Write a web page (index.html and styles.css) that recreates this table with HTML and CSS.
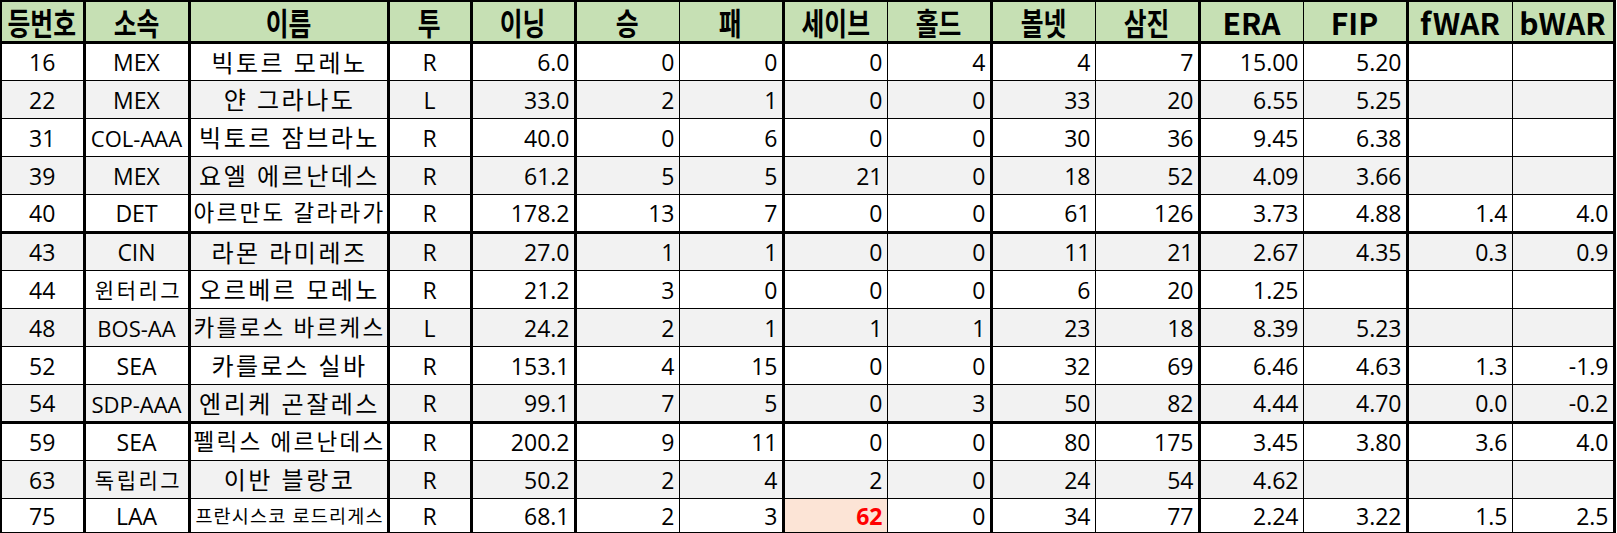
FILE: index.html
```html
<!DOCTYPE html>
<html lang="ko">
<head>
<meta charset="utf-8">
<title>투수 기록</title>
<link rel="stylesheet" href="styles.css">
</head>
<body>
<table class="sheet">
  <colgroup>
    <col class="w83"><col class="w105"><col class="w199"><col class="w83">
    <col class="w104"><col class="w104"><col class="w104"><col class="w104"><col class="w104">
    <col class="w104"><col class="w104"><col class="w104"><col class="w104">
    <col class="w105"><col class="w102">
  </colgroup>
  <thead>
    <tr>
      <th><span class="k">등번호</span></th>
      <th><span class="k">소속</span></th>
      <th><span class="k">이름</span></th>
      <th><span class="k">투</span></th>
      <th><span class="k">이닝</span></th>
      <th><span class="k">승</span></th>
      <th><span class="k">패</span></th>
      <th><span class="k">세이브</span></th>
      <th><span class="k">홀드</span></th>
      <th><span class="k">볼넷</span></th>
      <th><span class="k">삼진</span></th>
      <th><span class="l">ERA</span></th>
      <th><span class="l">FIP</span></th>
      <th><span class="l">fWAR</span></th>
      <th><span class="l">bWAR</span></th>
    </tr>
  </thead>
  <tbody>
    <tr><td>16</td><td>MEX</td><td>빅토르 모레노</td><td>R</td><td>6.0</td><td>0</td><td>0</td><td>0</td><td>4</td><td>4</td><td>7</td><td>15.00</td><td>5.20</td><td></td><td></td></tr>
    <tr class="alt"><td>22</td><td>MEX</td><td>얀 그라나도</td><td>L</td><td>33.0</td><td>2</td><td>1</td><td>0</td><td>0</td><td>33</td><td>20</td><td>6.55</td><td>5.25</td><td></td><td></td></tr>
    <tr><td>31</td><td class="sm">COL-AAA</td><td>빅토르 잠브라노</td><td>R</td><td>40.0</td><td>0</td><td>6</td><td>0</td><td>0</td><td>30</td><td>36</td><td>9.45</td><td>6.38</td><td></td><td></td></tr>
    <tr class="alt"><td>39</td><td>MEX</td><td>요엘 에르난데스</td><td>R</td><td>61.2</td><td>5</td><td>5</td><td>21</td><td>0</td><td>18</td><td>52</td><td>4.09</td><td>3.66</td><td></td><td></td></tr>
    <tr class="sep"><td>40</td><td>DET</td><td class="fit">아르만도 갈라라가</td><td>R</td><td>178.2</td><td>13</td><td>7</td><td>0</td><td>0</td><td>61</td><td>126</td><td>3.73</td><td>4.88</td><td>1.4</td><td>4.0</td></tr>
    <tr class="alt"><td>43</td><td>CIN</td><td>라몬 라미레즈</td><td>R</td><td>27.0</td><td>1</td><td>1</td><td>0</td><td>0</td><td>11</td><td>21</td><td>2.67</td><td>4.35</td><td>0.3</td><td>0.9</td></tr>
    <tr><td>44</td><td class="kt">윈터리그</td><td>오르베르 모레노</td><td>R</td><td>21.2</td><td>3</td><td>0</td><td>0</td><td>0</td><td>6</td><td>20</td><td>1.25</td><td></td><td></td><td></td></tr>
    <tr class="alt"><td>48</td><td class="sm">BOS-AA</td><td class="fit">카를로스 바르케스</td><td>L</td><td>24.2</td><td>2</td><td>1</td><td>1</td><td>1</td><td>23</td><td>18</td><td>8.39</td><td>5.23</td><td></td><td></td></tr>
    <tr><td>52</td><td>SEA</td><td>카를로스 실바</td><td>R</td><td>153.1</td><td>4</td><td>15</td><td>0</td><td>0</td><td>32</td><td>69</td><td>6.46</td><td>4.63</td><td>1.3</td><td>-1.9</td></tr>
    <tr class="alt sep"><td>54</td><td class="sm">SDP-AAA</td><td>엔리케 곤잘레스</td><td>R</td><td>99.1</td><td>7</td><td>5</td><td>0</td><td>3</td><td>50</td><td>82</td><td>4.44</td><td>4.70</td><td>0.0</td><td>-0.2</td></tr>
    <tr><td>59</td><td>SEA</td><td class="fit">펠릭스 에르난데스</td><td>R</td><td>200.2</td><td>9</td><td>11</td><td>0</td><td>0</td><td>80</td><td>175</td><td>3.45</td><td>3.80</td><td>3.6</td><td>4.0</td></tr>
    <tr class="alt"><td>63</td><td class="kt">독립리그</td><td>이반 블랑코</td><td>R</td><td>50.2</td><td>2</td><td>4</td><td>2</td><td>0</td><td>24</td><td>54</td><td>4.62</td><td></td><td></td><td></td></tr>
    <tr class="last"><td>75</td><td>LAA</td><td class="tiny">프란시스코 로드리게스</td><td>R</td><td>68.1</td><td>2</td><td>3</td><td class="hot">62</td><td>0</td><td>34</td><td>77</td><td>2.24</td><td>3.22</td><td>1.5</td><td>2.5</td></tr>
  </tbody>
</table>
</body>
</html>
```

FILE: styles.css
```css
html, body {
  margin: 0;
  padding: 0;
  background: #ffffff;
}

.sheet {
  border-collapse: collapse;
  table-layout: fixed;
  width: 1615px;
  font-family: "Open Sans", "Noto Sans CJK KR", sans-serif;
  font-size: 23px;
  color: #000000;
  border-top: 2px solid #000;
  border-left: 2px solid #000;
}

.w83 { width: 83px; }
.w102 { width: 102px; }
.w104 { width: 104px; }
.w105 { width: 105px; }
.w199 { width: 199px; }

.sheet th,
.sheet td {
  border: 1px solid #000;
  padding: 0 4px;
  white-space: nowrap;
  overflow: hidden;
  line-height: 1;
}

/* thick group separators */
.sheet th:nth-child(1), .sheet td:nth-child(1),
.sheet th:nth-child(2), .sheet td:nth-child(2),
.sheet th:nth-child(3), .sheet td:nth-child(3),
.sheet th:nth-child(4), .sheet td:nth-child(4),
.sheet th:nth-child(5), .sheet td:nth-child(5),
.sheet th:nth-child(7), .sheet td:nth-child(7),
.sheet th:nth-child(9), .sheet td:nth-child(9),
.sheet th:nth-child(11), .sheet td:nth-child(11),
.sheet th:nth-child(13), .sheet td:nth-child(13),
.sheet th:nth-child(15), .sheet td:nth-child(15) {
  border-right-width: 3px;
}

.sheet thead tr { height: 41px; }

.sheet th {
  background: #c6e0b4;
  font-family: "Noto Sans CJK KR", sans-serif;
  font-weight: 700;
  font-size: 31px;
  text-align: center;
  vertical-align: middle;
  border-bottom: 3px solid #000;
  overflow: visible;
}

.k {
  display: inline-block;
  transform: scaleX(0.8);
  margin: 0 -14px;
}

.l {
  display: inline-block;
  font-size: 30px;
  margin: 0 -4px;
}

.sheet tbody tr { height: 38px; }
.sheet tbody tr.last { height: 35px; }

.sheet td {
  text-align: right;
  vertical-align: middle;
  padding-top: 2px;
}

.sheet td:nth-child(-n+4) { text-align: center; }

.sheet td:nth-child(3) {
  font-size: 24px;
  letter-spacing: 2.5px;
  padding: 2px 0 0 2px;
}
.sheet td.fit { font-size: 22.5px; letter-spacing: 2.3px; }
.sheet td.tiny { font-size: 18.5px; letter-spacing: 1.2px; }
.sheet td.sm { font-size: 22px; padding-left: 0; padding-right: 0; }
.sheet td.kt { font-size: 21px; letter-spacing: 2.5px; padding-left: 6px; padding-right: 2px; }

.alt td { background: #f2f2f2; }

.sep td { border-bottom: 3px solid #000; }
.last td { border-bottom: 3px solid #000; }

.sheet td.hot {
  background: #fce4d6;
  color: #ff0000;
  font-weight: 700;
}
```
